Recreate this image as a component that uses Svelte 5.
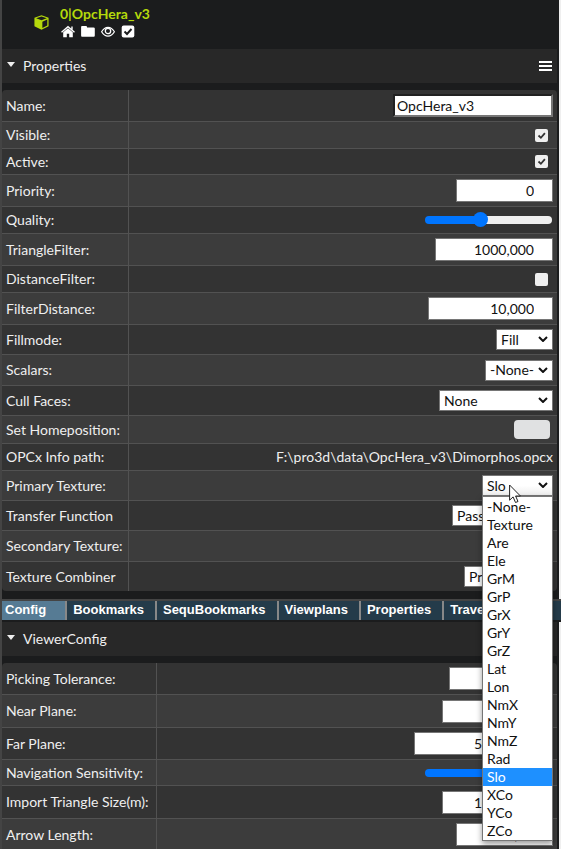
<script>
  const textures = ['-None-', 'Texture', 'Are', 'Ele', 'GrM', 'GrP', 'GrX', 'GrY', 'GrZ', 'Lat', 'Lon', 'NmX', 'NmY', 'NmZ', 'Rad', 'Slo', 'XCo', 'YCo', 'ZCo'];
  let texture = $state('Slo');

  const surface = [
    { id: 'name', label: 'Name:', kind: 'text', value: 'OpcHera_v3', row: 'r31' },
    { id: 'visible', label: 'Visible:', kind: 'check', value: true, row: 'r27' },
    { id: 'active', label: 'Active:', kind: 'check', value: true, row: 'r26' },
    { id: 'priority', label: 'Priority:', kind: 'number', value: '0', width: 'w97', row: 'r32' },
    { id: 'quality', label: 'Quality:', kind: 'range', value: 43, row: 'r27' },
    { id: 'triangle', label: 'TriangleFilter:', kind: 'number', value: '1000,000', width: 'w118', row: 'r32' },
    { id: 'distance', label: 'DistanceFilter:', kind: 'check', value: false, row: 'r27' },
    { id: 'filterdist', label: 'FilterDistance:', kind: 'number', value: '10,000', width: 'w125', row: 'r32' },
    { id: 'fill', label: 'Fillmode:', kind: 'select', value: 'Fill', width: 'w57', row: 'r30' },
    { id: 'scalars', label: 'Scalars:', kind: 'select', value: '-None-', width: 'w68', row: 'r31' },
    { id: 'cull', label: 'Cull Faces:', kind: 'select', value: 'None', width: 'w114', row: 'r30' },
    { id: 'home', label: 'Set Homeposition:', kind: 'button', row: 'r28' },
    { id: 'path', label: 'OPCx Info path:', kind: 'output', value: 'F:\\pro3d\\data\\OpcHera_v3\\Dimorphos.opcx', row: 'r27' },
    { id: 'primary', label: 'Primary Texture:', kind: 'texture', row: 'r30' },
    { id: 'transfer', label: 'Transfer Function', kind: 'select', value: 'Passthrough', width: 'w101', row: 'r30' },
    { id: 'secondary', label: 'Secondary Texture:', kind: 'select', value: '-None-', width: 'w68', row: 'r31' },
    { id: 'combiner', label: 'Texture Combiner', kind: 'select', value: 'Primary', width: 'w89', row: 'r30' }
  ];

  const viewer = [
    { id: 'picking', label: 'Picking Tolerance:', kind: 'number', value: '0,1', width: 'w104', row: 'r31' },
    { id: 'near', label: 'Near Plane:', kind: 'number', value: '0,1', width: 'w111', row: 'r33' },
    { id: 'far', label: 'Far Plane:', kind: 'number', value: '500000,0', width: 'w139', row: 'r32' },
    { id: 'nav', label: 'Navigation Sensitivity:', kind: 'range', value: 60, row: 'r26' },
    { id: 'import', label: 'Import Triangle Size(m):', kind: 'number', value: '1000,000', width: 'w111', row: 'r33' },
    { id: 'arrow', label: 'Arrow Length:', kind: 'number', value: '1,00', width: 'w97', row: 'r32' }
  ];

  const tabs = ['Config', 'Bookmarks', 'SequBookmarks', 'Viewplans', 'Properties', 'Traverse'];
</script>

{#snippet chevron()}
  <svg class="chevron" viewBox="0 0 10 6" aria-hidden="true"><path d="M1 1l4 4 4-4" fill="none" stroke="#111" stroke-width="2" /></svg>
{/snippet}

{#snippet table(rows, kind)}
  <table class={kind}>
    <tbody>
      {#each rows as r (r.id)}
        <tr class={r.row}>
          <th scope="row"><label for={r.id}>{r.label}</label></th>
          <td>
            <div class="cell">
              {#if r.kind === 'text'}
                <input class="name" id={r.id} type="text" value={r.value} />
              {:else if r.kind === 'number'}
                <input class="number {r.width}" id={r.id} type="text" inputmode="decimal" value={r.value} />
              {:else if r.kind === 'check'}
                <span class="check">
                  <input id={r.id} type="checkbox" checked={r.value} />
                  <svg viewBox="0 0 13 13" aria-hidden="true"><path d="M3.5 6.5l2.4 2.3 4-4.6" fill="none" stroke="#333" stroke-width="1.8" /></svg>
                </span>
              {:else if r.kind === 'range'}
                <input class="range" id={r.id} type="range" value={r.value} style="--fill: {r.value}%" />
              {:else if r.kind === 'select'}
                <span class="select {r.width}">
                  <select id={r.id}><option>{r.value}</option></select>
                  {@render chevron()}
                </span>
              {:else if r.kind === 'button'}
                <button class="home" id={r.id} aria-label="Set Homeposition"></button>
              {:else if r.kind === 'output'}
                <output id={r.id}>{r.value}</output>
              {:else}
                <span class="select open w71">
                  <select id={r.id} bind:value={texture}>
                    {#each textures as t}<option>{t}</option>{/each}
                  </select>
                  {@render chevron()}
                  <ul class="menu" role="listbox" aria-label="Primary Texture">
                    {#each textures as t}
                      <li role="option" aria-selected={t === texture}>{t}</li>
                    {/each}
                  </ul>
                  <svg class="cursor" viewBox="0 0 12 20" aria-hidden="true"><path d="M.6 1v15.2l3.5-3.3 2.4 5.6 2.5-1-2.4-5.5h4.8z" fill="#fff" stroke="#222" /></svg>
                </span>
              {/if}
            </div>
          </td>
        </tr>
      {/each}
    </tbody>
  </table>
{/snippet}

{#snippet heading(title)}
  <header class="heading">
    <svg class="caret" viewBox="0 0 8 5" aria-hidden="true"><path d="M0 0h8L4 5z" fill="#eee" /></svg>
    <h2>{title}</h2>
    <button class="burger" aria-label="{title} menu"><i></i><i></i><i></i></button>
  </header>
{/snippet}

<main>
  <section class="pane">
    <div class="node">
      <svg class="cube" viewBox="0 0 14 14" aria-hidden="true">
        <path d="M7 .2L13.6 2.6V10.6L7 13.8.4 10.6V2.6z" fill="#b5d90b" />
        <path d="M2 3.1L7 1.3l5 1.8-5 1.9zM7.8 6.2l4.6-1.9v5.6l-4.6 2.3z" fill="#1b1c1d" />
      </svg>
      <div>
        <h1>0|OpcHera_v3</h1>
        <div class="actions">
          <button aria-label="Home"><svg viewBox="0 0 14 12"><path d="M7 2.8L2.200 6.800V11.700h3.600V8.300h2.400v3.400h3.600V6.800z" fill="#fff" /><path d="M.5 6.700L7 1.200l6.500 5.500M11 1v3" fill="none" stroke="#fff" stroke-width="1.400" /></svg></button>
          <button aria-label="Open folder"><svg viewBox="0 0 14 12"><path d="M1 .5h4q1 0 1 1v.5h6.500q1.300 0 1.300 1V10q0 1.200-1 1.200H1Q.1 11.200.1 10V1.500Q.1.5 1 .5z" fill="#fff" /></svg></button>
          <button aria-label="Show"><svg viewBox="0 0 14 12"><path d="M.6 6.300Q3.200 1.800 7 1.800t6.400 4.500Q10.800 10.700 7 10.700T.6 6.300z" fill="none" stroke="#fff" stroke-width="1.200" /><circle cx="7" cy="5.500" r="2.700" fill="none" stroke="#fff" stroke-width="1.300" /></svg></button>
          <button aria-label="Active"><svg viewBox="0 0 14 12"><rect x=".7" width="12.600" height="12" rx="2" fill="#fff" /><path d="M3.500 6l2.500 2.500 4.500-5" fill="none" stroke="#1b1c1d" stroke-width="1.900" /></svg></button>
        </div>
      </div>
    </div>
    {@render heading('Properties')}
    {@render table(surface, 'surface')}
  </section>
  <nav>
    {#each tabs as tab, i}
      <a href="#{tab}" class:active={i === 0}>{tab}</a>
    {/each}
  </nav>
  <section class="pane">
    {@render heading('ViewerConfig')}
    {@render table(viewer, 'viewer')}
  </section>
</main>

<style>
  :global(body) { margin: 0; background: #444; }
  :global(#app) { height: 100vh; overflow: hidden; }
  * { box-sizing: border-box; }
  main { padding-left: 2px; font: 14px/18px Lato, sans-serif; color: #efefef; }
  .pane { background: #1b1c1d; border-right: 2px solid #efefef; padding-right: 2px; }
  .pane:first-child { padding-bottom: 8px; }
  .node { display: flex; height: 49px; padding: 5px 0 0 32px; gap: 11px; }
  .cube { width: 15px; height: 15px; margin-top: 10px; }
  h1 { margin: 0; font-size: 14px; line-height: 18px; color: #b5d90b; }
  .actions { display: flex; gap: 6px; padding: 2px 0 0 1px; }
  .actions button { width: 14px; height: 13px; padding: 0; border: 0; background: none; }
  .actions svg { display: block; width: 14px; height: 13px; }
  .heading { display: flex; align-items: center; height: 34px; padding: 0 5px; background: #282828; }
  .caret { width: 8px; height: 5px; margin-bottom: 3px; }
  h2 { margin: 0; padding-left: 8px; font-size: 14px; font-weight: 400; flex: 1; }
  .burger { display: flex; flex-direction: column; gap: 2px; width: 13px; padding: 0; border: 0; background: none; }
  .burger i { height: 2px; background: #fff; }
  table { width: 100%; margin-top: 7px; border-spacing: 0; table-layout: fixed; background: #333; border-radius: 4px; }
  tr:nth-child(even) { background: #3c3c3c; }
  th, td { padding: 0; border-top: 1px solid #525252; }
  tr:first-child > * { border-top: 0; }
  th { width: 127px; padding-left: 4px; border-right: 1px solid #525252; text-align: left; font-weight: 400; white-space: nowrap; }
  .viewer th { width: 155px; }
  td { padding-right: 4px; }
  .cell { display: flex; justify-content: flex-end; align-items: center; }
  .r26 { height: 26px; } .r27 { height: 27px; } .r28 { height: 28px; } .r30 { height: 30px; }
  .r31 { height: 31px; } .r32 { height: 32px; } .r33 { height: 33px; }
  .w57 { width: 57px; } .w68 { width: 68px; } .w71 { width: 71px; } .w89 { width: 89px; }
  .w97 { width: 97px; } .w101 { width: 101px; } .w104 { width: 104px; } .w111 { width: 111px; }
  .w114 { width: 114px; } .w118 { width: 118px; } .w125 { width: 125px; } .w139 { width: 139px; }
  input, select { font: inherit; color: #111; margin: 0; }
  .name { width: 160px; height: 23px; padding: 0 2px; border: 2px inset #767676; background: #fff; }
  .number { height: 23px; padding: 0 18px 0 2px; border: 1px solid #767676; background: #fff; text-align: right; }
  .check { position: relative; width: 13px; height: 13px; margin-right: 5px; }
  .check input { display: block; appearance: none; width: 13px; height: 13px; border-radius: 2px; background: #efefef; }
  .check svg { position: absolute; inset: 0; display: none; pointer-events: none; }
  .check input:checked + svg { display: block; }
  .range { appearance: none; width: 127px; height: 16px; background: none; margin-right: 1px; }
  .range::-webkit-slider-runnable-track { height: 8px; border-radius: 4px; background: linear-gradient(to right, #0075ff var(--fill), #efefef var(--fill)); }
  .range::-webkit-slider-thumb { appearance: none; width: 15px; height: 15px; margin-top: -4px; border-radius: 50%; background: #0075ff; }
  .select { position: relative; height: 21px; }
  select { display: block; appearance: none; width: 100%; height: 21px; padding: 0 4px; border: 1px solid #767676; border-radius: 0; background: #fff; }
  .open select { background: linear-gradient(#fff 50%, #eee); }
  .chevron { position: absolute; right: 5px; top: 7px; width: 10px; height: 6px; pointer-events: none; }
  .home { width: 36px; height: 19px; margin-right: 3px; padding: 0; border: 0; border-radius: 4px; background: #e0e1e2; }
  .menu { position: absolute; z-index: 2; top: 21px; left: 0; width: 100%; margin: 0; padding: 1px 0 0; list-style: none; background: #fff; border: 1px solid #767676; color: #111; box-shadow: 0 3px 6px #0006; }
  .menu li { height: 18px; padding-left: 4px; }
  .menu li[aria-selected='true'] { background: #1e90ff; color: #fff; }
  .cursor { position: absolute; z-index: 3; left: 27px; top: 9px; width: 12px; height: 20px; }
  nav { display: flex; height: 23px; overflow: hidden; background: #243b4a; border-top: 2px solid #444; border-bottom: 2px solid #1b1c1d; font: bold 13px/17px "Liberation Sans", sans-serif; }
  nav a { padding: 0 11px 0 6px; color: #fff; text-decoration: none; border-right: 2px solid #888; }
  nav a.active { padding: 0 19px 0 3px; background: #567b94; }
</style>
